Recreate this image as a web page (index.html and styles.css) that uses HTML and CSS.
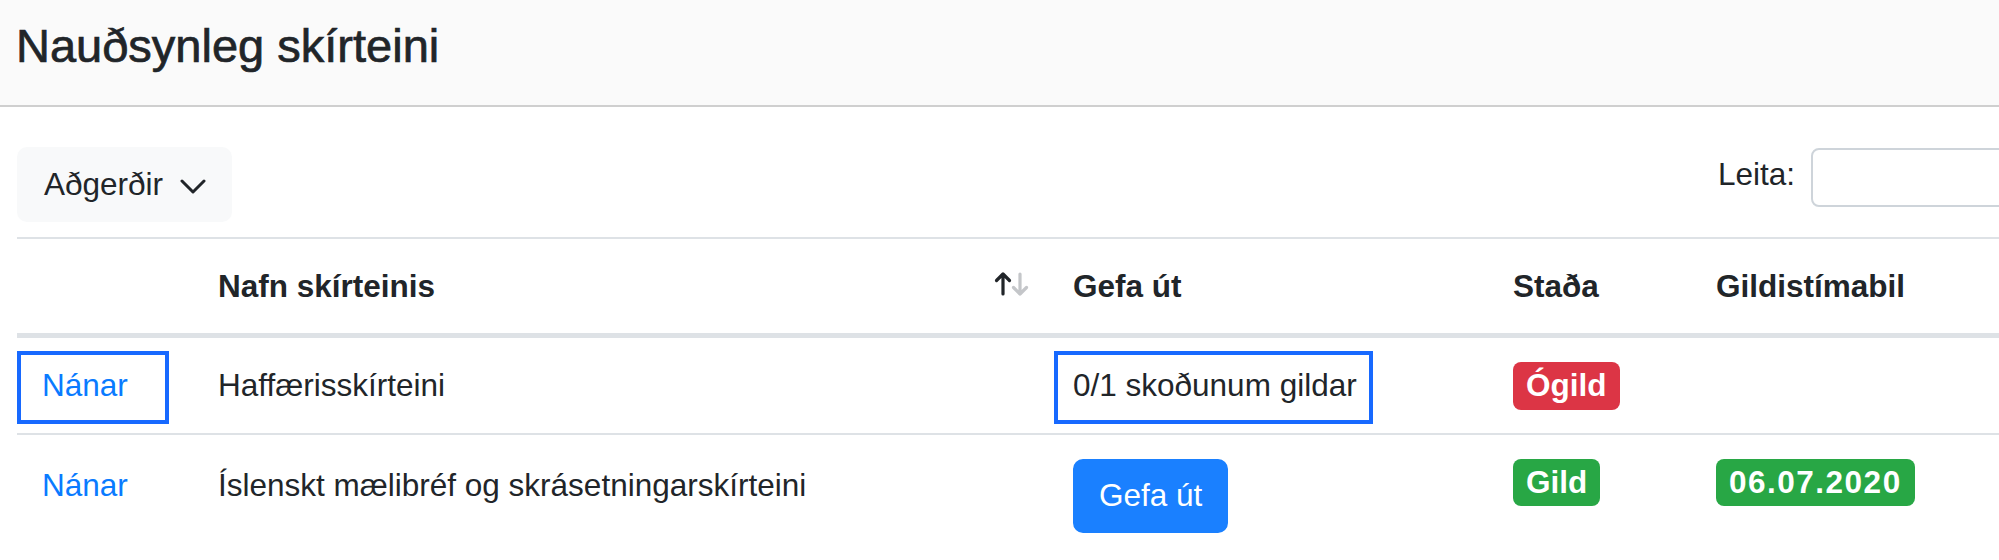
FILE: index.html
```html
<!DOCTYPE html>
<html lang="is">
<head>
<meta charset="utf-8">
<title>Nauðsynleg skírteini</title>
<link rel="stylesheet" href="styles.css">
</head>
<body>
<header class="page-header">
  <h1 class="page-title">Nauðsynleg skírteini</h1>
</header>
<main class="content">
  <div class="toolbar">
    <button class="btn-actions" type="button">
      <span>Aðgerðir</span>
      <svg class="chevron" width="26" height="15" viewBox="0 0 26 15" aria-hidden="true"><polyline points="2,2 13,13 24,2" fill="none" stroke="#212529" stroke-width="3" stroke-linecap="round" stroke-linejoin="round"/></svg>
    </button>
    <label class="search">
      <span class="search-label">Leita:</span>
      <input class="search-input" type="search">
    </label>
  </div>
  <table class="cert-table">
    <colgroup>
      <col class="c1"><col class="c2"><col class="c3"><col class="c4"><col class="c5">
    </colgroup>
    <thead>
      <tr>
        <th></th>
        <th>
          <div class="th-sort">
            <span>Nafn skírteinis</span>
            <svg class="sort-icon" width="38" height="26" viewBox="0 0 38 26" aria-hidden="true">
              <g fill="none" stroke-width="3.2" stroke-linecap="round" stroke-linejoin="round">
                <path d="M9 23 V3 M2.5 9.5 L9 3 L15.5 9.5" stroke="#212529"/>
                <path d="M26 3 V23 M19.5 16.5 L26 23 L32.5 16.5" stroke="#c4c6c9"/>
              </g>
            </svg>
          </div>
        </th>
        <th>Gefa út</th>
        <th>Staða</th>
        <th>Gildistímabil</th>
      </tr>
    </thead>
    <tbody>
      <tr>
        <td class="has-focus"><a class="link" href="#">Nánar</a><span class="focus-box focus-a"></span></td>
        <td>Haffærisskírteini</td>
        <td class="has-focus">0/1 skoðunum gildar<span class="focus-box focus-b"></span></td>
        <td><span class="badge badge-danger">Ógild</span></td>
        <td></td>
      </tr>
      <tr class="row-last">
        <td class="text-cell"><a class="link" href="#">Nánar</a></td>
        <td class="text-cell">Íslenskt mælibréf og skrásetningarskírteini</td>
        <td><button class="btn-primary" type="button">Gefa út</button></td>
        <td><span class="badge badge-success">Gild</span></td>
        <td><span class="badge badge-success badge-date">06.07.2020</span></td>
      </tr>
    </tbody>
  </table>
</main>
</body>
</html>
```
FILE: styles.css
```css
html, body {
  margin: 0;
  padding: 0;
  overflow: hidden;
  background: #ffffff;
}

body {
  font-family: "Liberation Sans", Arial, sans-serif;
  font-size: 31.5px;
  line-height: 1.5;
  color: #212529;
}

.page-header {
  background: #fafafa;
  border-bottom: 2px solid #cfcfcf;
  height: 105px;
  box-sizing: content-box;
  padding: 0 16px;
}

.page-title {
  margin: 0;
  padding-top: 18px;
  font-size: 47px;
  line-height: 1.2;
  font-weight: 400;
  -webkit-text-stroke: 0.7px #212529;
  color: #212529;
}

.content {
  width: 2100px;
  padding-left: 17px;
}

.toolbar {
  display: flex;
  justify-content: space-between;
  align-items: flex-start;
  margin-top: 40px;
  margin-bottom: 15px;
}

.btn-actions {
  display: flex;
  align-items: center;
  gap: 17px;
  height: 75px;
  padding: 0 26px 0 27px;
  border: none;
  border-radius: 10px;
  background: #f8f9fa;
  color: #212529;
  font-family: inherit;
  font-size: 31.5px;
  line-height: 1.5;
}

.chevron {
  display: block;
  margin-top: 4px;
}

.search {
  display: flex;
  align-items: flex-start;
  margin-top: 1px;
}

.search-label {
  line-height: 47px;
  margin-top: 3px;
}

.search-input {
  margin-left: 16px;
  width: 306px;
  height: 59px;
  box-sizing: border-box;
  border: 2px solid #ced4da;
  border-radius: 8px;
  background: #fff;
  font-family: inherit;
  font-size: 28px;
}

.cert-table {
  width: 2083px;
  table-layout: fixed;
  border-collapse: separate;
  border-spacing: 0;
}

.c1 { width: 177px; }
.c2 { width: 855px; }
.c3 { width: 440px; }
.c4 { width: 203px; }
.c5 { width: auto; }

.cert-table th,
.cert-table td {
  padding: 24px 24px 23px 24px;
  text-align: left;
  vertical-align: top;
  line-height: 47px;
}

.cert-table th {
  font-weight: 700;
  border-top: 2px solid #dee2e6;
  border-bottom: 5px solid #dee2e6;
}

.cert-table td {
  border-bottom: 2px solid #dee2e6;
}

.cert-table .row-last td {
  padding-bottom: 30px;
}

.cert-table .row-last .text-cell {
  padding-top: 27px;
}

.cert-table td:first-child {
  padding-left: 25px;
}

.th-sort {
  display: flex;
  justify-content: space-between;
  align-items: flex-start;
}

.sort-icon {
  display: block;
  margin-top: 8px;
  margin-right: -7px;
}

.link {
  color: #0a7bff;
  text-decoration: none;
}

.has-focus {
  position: relative;
}

.focus-box {
  position: absolute;
  top: 13px;
  height: 73px;
  box-sizing: border-box;
  border: 4px solid #1769ff;
  pointer-events: none;
}

.focus-a {
  left: 0;
  width: 152px;
}

.focus-b {
  left: 5px;
  width: 319px;
}

.badge {
  display: inline-block;
  vertical-align: top;
  padding: 8px 13px;
  border-radius: 8px;
  font-size: 31.5px;
  font-weight: 700;
  line-height: 1;
  color: #ffffff;
  white-space: nowrap;
}

.badge-danger { background: #dc3545; }
.badge-success { background: #28a745; }

.badge-date {
  letter-spacing: 1.5px;
}

.btn-primary {
  display: inline-block;
  vertical-align: top;
  height: 74px;
  padding: 0 24px;
  border: 2px solid #1a80ff;
  border-radius: 10px;
  background: #1a80ff;
  color: #ffffff;
  font-family: inherit;
  font-size: 31.5px;
  line-height: 1.5;
}
```
